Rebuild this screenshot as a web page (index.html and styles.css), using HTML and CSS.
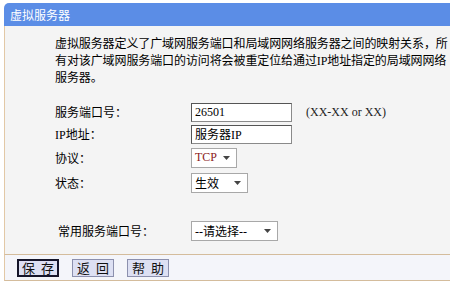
FILE: index.html
```html
<!DOCTYPE html>
<html lang="zh-CN">
<head>
  <meta charset="UTF-8" />
  <title>虚拟服务器</title>
  <link rel="stylesheet" href="styles.css">
</head>
<body>

  <div class="frame">
    <div class="title">虚拟服务器</div>

    <div class="panel">
      <p class="desc">虚拟服务器定义了广域网服务端口和局域网网络服务器之间的映射关系，所有对该广域网服务端口的访问将会被重定位给通过IP地址指定的局域网网络服务器。</p>

      <div class="form">
        <div class="row">
          <label for="port">服务端口号：</label>
          <input type="text" id="port" class="txt" value="26501">
          <span class="hint">(XX-XX or XX)</span>
        </div>
        <div class="row">
          <label for="ip">IP地址：</label>
          <input type="text" id="ip" class="txt" value="服务器IP">
        </div>
        <div class="row tall">
          <label>协议：</label>
          <div class="sel sel-proto"><span class="tcp">TCP</span><svg class="arrow" width="7" height="4" viewBox="0 0 7 4"><path d="M0 0h7L3.5 4z" fill="#444"/></svg></div>
        </div>
        <div class="row tall">
          <label>状态：</label>
          <div class="sel sel-state"><span>生效</span><svg class="arrow" width="7" height="4" viewBox="0 0 7 4"><path d="M0 0h7L3.5 4z" fill="#444"/></svg></div>
        </div>
        <div class="row common">
          <label>常用服务端口号：</label>
          <div class="sel sel-common"><span>--请选择--</span><svg class="arrow" width="7" height="4" viewBox="0 0 7 4"><path d="M0 0h7L3.5 4z" fill="#444"/></svg></div>
        </div>
      </div>
    </div>

    <div class="actions">
      <button class="btn btn-default">保 存</button>
      <button class="btn">返 回</button>
      <button class="btn">帮 助</button>
    </div>
  </div>

</body>
</html>
```

FILE: styles.css
```css
body {
  margin: 0;
  background-color: #ffffff;
  font-family: 'Liberation Serif', 'Noto Sans CJK SC', serif;
  font-size: 12px;
  color: #000;
}

.frame {
  margin: 3px 0 0 4px;
}

.title {
  height: 23px;
  line-height: 23px;
  padding-left: 6px;
  background-color: #5b8de6;
  color: #ffffff;
  border-radius: 5px 0 0 0;
  font-family: 'Noto Sans CJK SC', sans-serif;
  font-size: 12px;
}

.panel {
  background-color: #f4f4f4;
  border-left: 1px solid #e2c8a6;
  padding: 10px 0 12px 50px;
}

.desc {
  margin: 0;
  line-height: 17px;
  letter-spacing: -0.1px;
}

.form {
  margin-top: 14px;
}

.row {
  display: flex;
  align-items: center;
  height: 22px;
}

.row.tall {
  height: 25px;
}

.row label {
  width: 136px;
}

.row.common {
  margin-top: 24px;
  height: 23px;
}

.row.common label {
  width: 133px;
  padding-left: 3px;
}

.txt {
  box-sizing: border-box;
  width: 101px;
  height: 19px;
  margin: 0;
  padding: 0 3px;
  border: 1px solid #8a8a8a;
  border-top-color: #555;
  border-left-color: #555;
  background-color: #ffffff;
  font-family: 'Liberation Serif', 'Noto Sans CJK SC', serif;
  font-size: 12px;
  color: #000;
}

.hint {
  margin-left: 14px;
  color: #222;
}

.sel {
  box-sizing: border-box;
  height: 20px;
  display: flex;
  align-items: center;
  justify-content: space-between;
  padding: 0 6px 0 3px;
  background-color: #ffffff;
  border: 1px solid #a8a8a8;
}

.sel-proto {
  width: 46px;
}

.sel-state {
  width: 57px;
}

.sel-common {
  width: 87px;
}

.tcp {
  color: #8b1a1a;
}

.actions {
  height: 25px;
  display: flex;
  align-items: center;
  gap: 13px;
  padding-left: 12px;
  background-color: #f4f5fa;
  border-top: 1px solid #d4bc9c;
  border-bottom: 1px solid #d4bc9c;
  border-left: 1px solid #e2c8a6;
}

.btn {
  box-sizing: border-box;
  width: 42px;
  height: 18px;
  padding: 0;
  background-color: #dde0f3;
  border: 1px solid #8c90ae;
  font-family: 'Noto Sans CJK SC', sans-serif;
  font-size: 13px;
  line-height: 14px;
  word-spacing: 3px;
  color: #111;
}

.btn-default {
  border: 2px solid #15152a;
}
```
